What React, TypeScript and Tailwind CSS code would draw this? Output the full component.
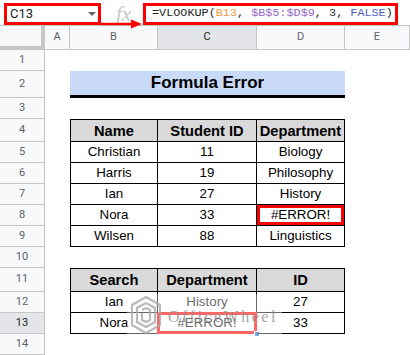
import React from 'react';

type Row = {
  n: number;
  h: string;
  cells?: string[];
  head?: boolean;
  title?: boolean;
  errD?: boolean;
  sel?: boolean;
};

const rows: Row[] = [
  { n: 1, h: 'h-[21px]' },
  { n: 2, h: 'h-[27px]', title: true },
  { n: 3, h: 'h-[21px]' },
  { n: 4, h: 'h-[23px]', cells: ['Name', 'Student ID', 'Department'], head: true },
  { n: 5, h: 'h-[21px]', cells: ['Christian', '11', 'Biology'] },
  { n: 6, h: 'h-[21px]', cells: ['Harris', '19', 'Philosophy'] },
  { n: 7, h: 'h-[21px]', cells: ['Ian', '27', 'History'] },
  { n: 8, h: 'h-[21px]', cells: ['Nora', '33', '#ERROR!'], errD: true },
  { n: 9, h: 'h-[21px]', cells: ['Wilsen', '88', 'Linguistics'] },
  { n: 10, h: 'h-[21px]' },
  { n: 11, h: 'h-[24px]', cells: ['Search', 'Department', 'ID'], head: true },
  { n: 12, h: 'h-[21px]', cells: ['Ian', 'History', '27'] },
  { n: 13, h: 'h-[21px]', cells: ['Nora', '#ERROR!', '33'], sel: true },
  { n: 14, h: 'h-[21px]' },
];

const widths = ['w-[88px]', 'w-[99px]', 'w-[88px]'];

const TopBar = () => (
  <div className="relative h-[26px] flex items-start pt-[3px] border-b border-[#c4c7c5] bg-white">
    <div className="ml-[4px] w-[97px] h-[22px] border-[3px] border-[#ff0000] flex items-center justify-between pl-[3px] pr-[2px]">
      <span className="font-['Roboto',sans-serif] text-[13px] text-[#202124]">C13</span>
      <span className="w-0 h-0 border-l-[4px] border-r-[4px] border-t-[4px] border-l-transparent border-r-transparent border-t-[#5f6368]" />
    </div>
    <div className="w-[42px] h-[22px] flex items-center justify-center pl-[3px]">
      <span className="font-['Liberation_Serif',serif] italic text-[21px] leading-none text-[#c8c8c8]">fx</span>
    </div>
    <div className="w-[255px] h-[22px] border-[3px] border-[#ff0000] flex items-center pl-[6px] font-['Liberation_Mono',monospace] text-[11.8px] text-[#222] whitespace-pre">
      <span>=VLOOKUP(</span>
      <span className="text-[#f29a45]">B13</span>
      <span>, </span>
      <span className="text-[#9466c9]">$B$5:$D$9</span>
      <span>, </span>
      <span className="text-[#333]">3</span>
      <span>, </span>
      <span className="text-[#4f5fc4]">FALSE</span>
      <span>)</span>
    </div>
    <svg className="absolute left-[101px] top-[18px]" width="42" height="12" viewBox="0 0 42 12">
      <line x1="0" y1="6" x2="33" y2="6" stroke="#ff0000" strokeWidth="2.5" />
      <polygon points="30,1.5 41,6 30,10.5" fill="#ff0000" />
    </svg>
  </div>
);

const ColHeader = () => (
  <div className="flex h-[24px] font-['Roboto',sans-serif] text-[11px] text-[#5f6368]">
    <div className="w-[45px] bg-[#f8f9fa] border-r-[4px] border-b-[4px] border-[#c4c7c5]" />
    {[
      ['A', 'w-[25px]', false],
      ['B', 'w-[88px]', false],
      ['C', 'w-[99px]', true],
      ['D', 'w-[88px]', false],
      ['E', 'w-[65px]', false],
    ].map(([l, w, s]) => (
      <div
        key={l as string}
        className={`${w} flex items-center justify-center border-r border-b border-[#c4c7c5] ${s ? 'bg-[#e3e5e8] text-[#202124]' : 'bg-[#f8f9fa]'}`}
      >
        {l}
      </div>
    ))}
  </div>
);

const SheetRow = ({ r }: { r: Row }) => (
  <div className={`flex ${r.h}`}>
    <div
      className={`w-[45px] shrink-0 flex items-center justify-center border-r border-b border-[#c4c7c5] font-['Roboto',sans-serif] text-[11px] ${r.sel ? 'bg-[#e3e5e8] text-[#202124]' : 'bg-[#f8f9fa] text-[#5f6368]'}`}
    >
      {r.n}
    </div>
    <div className="w-[25px] shrink-0" />
    {r.title ? (
      <div className="w-[275px] shrink-0 bg-[#c9daf8] border-b-[3px] border-black flex items-center justify-center font-bold text-[17px] text-black">
        Formula Error
      </div>
    ) : r.cells ? (
      r.cells.map((c, i) => (
        <div
          key={i}
          className={`${widths[i]} shrink-0 relative flex items-center justify-center border-black border-r border-b ${i === 0 ? 'border-l' : ''} ${r.head ? 'border-t bg-[#d9d9d9] font-bold text-[14.67px]' : 'text-[13.33px]'} text-black`}
        >
          {c}
          {r.errD && i === 2 && <div className="absolute inset-0 border-[3px] border-[#ff0000]" />}
          {r.sel && i === 1 && (
            <>
              <div className="absolute -inset-px border-2 border-[#1a73e8]" />
              <div className="absolute -left-px -top-px -right-px -bottom-px border-[3px] border-[#ff0000]" />
              <div className="absolute right-[-4px] bottom-[-4px] w-[6px] h-[6px] bg-[#1a73e8] border border-white" />
            </>
          )}
        </div>
      ))
    ) : (
      <div className="w-[275px] shrink-0" />
    )}
    <div className="w-[65px] shrink-0" />
  </div>
);

const Watermark = () => (
  <div className="absolute left-[127px] top-[294px] w-[155px] h-[42px] bg-white/40 flex items-center gap-[6px] pl-[3px] pointer-events-none">
    <svg width="32" height="40" viewBox="0 0 32 40" fill="none" stroke="#a9a9a9" strokeWidth="2.2" opacity="0.8">
      <polygon points="16,2 30,10 30,30 16,38 2,30 2,10" />
      <polyline points="16,8 25,13 25,27 16,32 7,27 7,13 16,8" />
      <polyline points="12,15 16,13 20,15 20,25 16,27 12,25 12,18" />
    </svg>
    <span className="font-['Liberation_Serif',serif] text-[16px] tracking-[2.5px] text-[#8f8f8f] opacity-80 mt-[4px]">
      OfficeWheel
    </span>
  </div>
);

export default function App() {
  return (
    <div className="relative w-[410px] h-[355px] overflow-hidden bg-white font-['Liberation_Sans',Arial,sans-serif]">
      <TopBar />
      <ColHeader />
      {rows.map((r) => (
        <SheetRow key={r.n} r={r} />
      ))}
      <Watermark />
    </div>
  );
}
